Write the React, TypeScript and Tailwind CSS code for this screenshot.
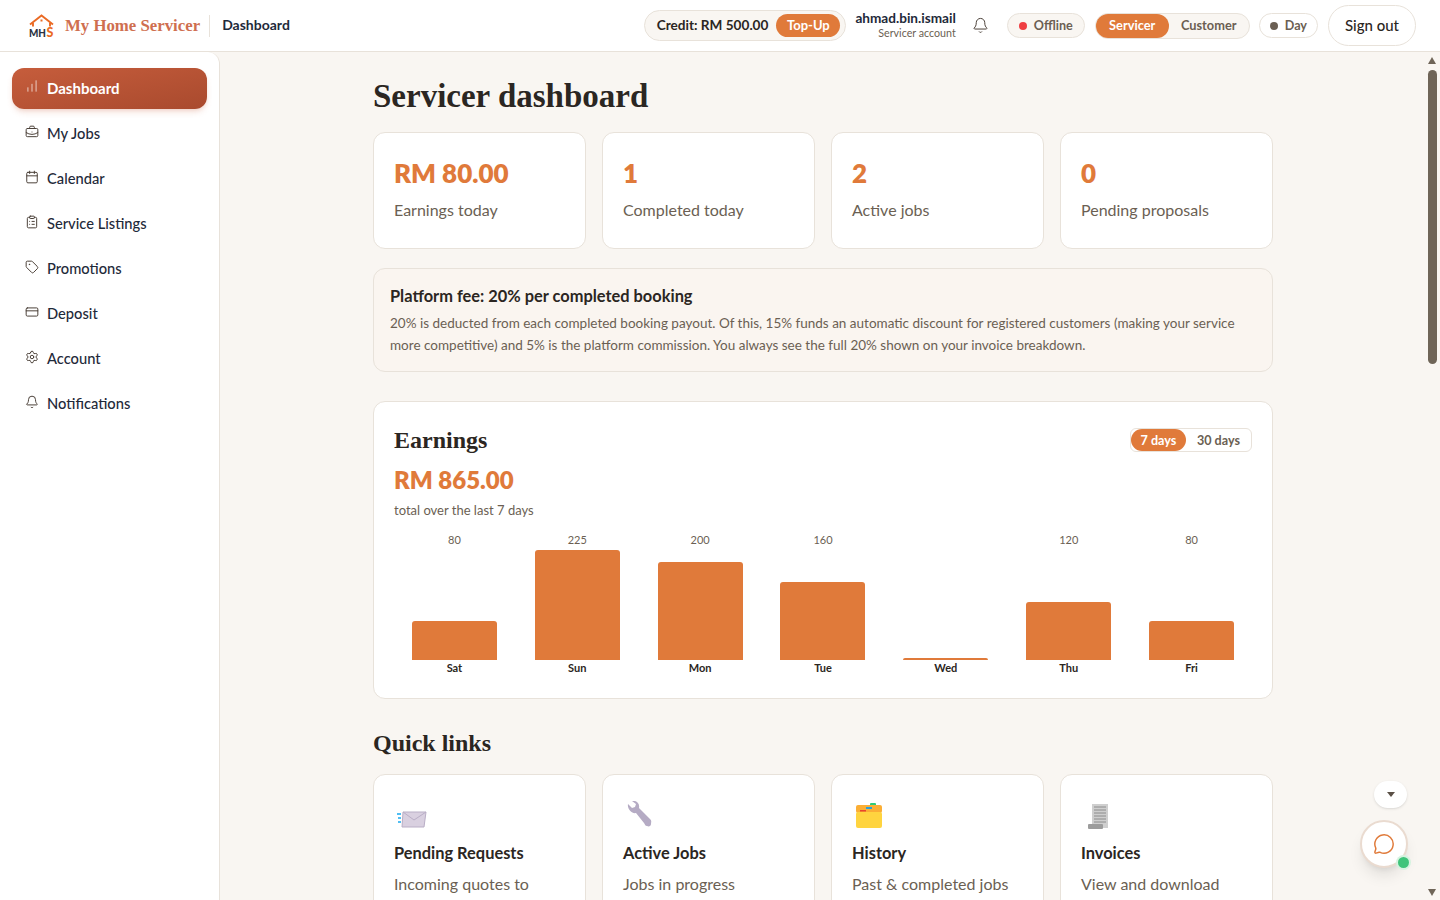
import { Bell, BriefcaseBusiness, Calendar, ChartNoAxesColumnIncreasing, ClipboardList, CreditCard, MessageCircle, Settings, Tag } from 'lucide-react';

const sans = { fontFamily: 'Lato, "Noto Sans", sans-serif' };

const navItems = [
  { label: 'Dashboard', icon: ChartNoAxesColumnIncreasing, active: true },
  { label: 'My Jobs', icon: BriefcaseBusiness },
  { label: 'Calendar', icon: Calendar },
  { label: 'Service Listings', icon: ClipboardList },
  { label: 'Promotions', icon: Tag },
  { label: 'Deposit', icon: CreditCard },
  { label: 'Account', icon: Settings },
  { label: 'Notifications', icon: Bell },
];

const stats = [
  { value: 'RM 80.00', label: 'Earnings today' },
  { value: '1', label: 'Completed today' },
  { value: '2', label: 'Active jobs' },
  { value: '0', label: 'Pending proposals' },
];

const bars = [
  { day: 'Sat', value: 80, height: 39 },
  { day: 'Sun', value: 225, height: 110 },
  { day: 'Mon', value: 200, height: 98 },
  { day: 'Tue', value: 160, height: 78 },
  { day: 'Wed', value: 0, height: 2 },
  { day: 'Thu', value: 120, height: 58 },
  { day: 'Fri', value: 80, height: 39 },
];

function Logo() {
  return (
    <svg width="27" height="24" viewBox="0 0 27 24" fill="none">
      <path d="M2 10.5 13.5 1.5 25 10.5M5 9v3.5M22 9v3.5" stroke="#ea6a24" strokeWidth="1.9" />
      <path d="M12.5 5.5h2v2h-2z" fill="#ea6a24" />
      <text x="1" y="22.5" fontSize="11.5" fontWeight="900" fill="#2a3342" fontFamily="Lato, sans-serif" textLength="17" lengthAdjust="spacingAndGlyphs">MH</text>
      <text x="18.5" y="22.5" fontSize="12.5" fontWeight="900" fill="#ea6a24" fontFamily="Lato, sans-serif">S</text>
    </svg>
  );
}

function MailIcon() {
  return (
    <svg width="32" height="20" viewBox="0 0 32 20" className="ml-[2px]">
      <path d="M1 5h4M2 9h3M2 13h3" stroke="#18a9ee" strokeWidth="1.5" />
      <path d="M7 3h23l-2 15H6z" fill="#d9d0e0" stroke="#b9aec6" />
      <path d="M7 3l11 8 12-8" fill="none" stroke="#b9aec6" />
    </svg>
  );
}

function WrenchIcon() {
  return (
    <svg width="28" height="28" viewBox="0 0 28 28" className="ml-[3px]">
      <path d="M2 3l4 4 3-1 1-3-4-3c4-1 8 2 7 7l11 11c2 2 1 3 1 5 0 2-2 3-4 2-2 0-2-2-3-3L10 12C6 13 1 8 2 3z" fill="#b5abc4" />
    </svg>
  );
}

function FolderIcon() {
  return (
    <svg width="28" height="26" viewBox="0 0 28 26" className="ml-[3px]">
      <rect x="15" y="0" width="6" height="3" rx="1" fill="#2fca78" />
      <rect x="1" y="2" width="26" height="8" rx="2" fill="#fbae35" />
      <rect x="11" y="4" width="6" height="2" fill="#2a9fd8" />
      <rect x="5" y="7" width="6" height="1.5" fill="#e8452c" />
      <rect x="1" y="9" width="26" height="16" rx="2" fill="#ffd43f" />
    </svg>
  );
}

function ReceiptIcon() {
  return (
    <svg width="22" height="26" viewBox="0 0 22 26" className="ml-[6px]">
      <rect x="5" y="1" width="16" height="24" fill="#cfcfcf" />
      <path d="M7 4h12M7 7h12M7 10h12M7 13h12M7 16h12M7 19h12" stroke="#8c8c8c" />
      <rect x="1" y="21" width="15" height="5" rx="1" fill="#9c9c9c" />
    </svg>
  );
}

const quickLinks = [
  { icon: <MailIcon />, title: 'Pending Requests', text: 'Incoming quotes to' },
  { icon: <WrenchIcon />, title: 'Active Jobs', text: 'Jobs in progress' },
  { icon: <FolderIcon />, title: 'History', text: 'Past & completed jobs' },
  { icon: <ReceiptIcon />, title: 'Invoices', text: 'View and download' },
];

export default function App() {
  return (
    <div className="relative flex h-[900px] flex-col overflow-hidden bg-[#f9f6f2] text-[#2b2622]" style={sans}>
      <header className="flex h-[52px] shrink-0 items-center justify-between border-b border-[#e8e2da] bg-white pl-7 pr-6">
        <div className="flex items-center">
          <Logo />
          <span className="ml-[10px] font-['Liberation_Serif',serif] text-[16.8px] font-bold text-[#cf6f50]">My Home Servicer</span>
          <span className="ml-[9px] h-[22px] w-px bg-[#e8e2da]" />
          <span className="mb-[2px] ml-3 text-[14px] font-bold text-[#1f2a3a]">Dashboard</span>
        </div>
        <div className="flex items-center">
          <div className="flex h-[31px] items-center gap-2 rounded-full border border-[#e8e2da] bg-[#f9f6f2] pl-3 pr-[5px] text-[13.6px] font-bold">
            <span className="whitespace-nowrap">Credit: RM 500.00</span>
            <span className="flex h-[23px] w-[64px] items-center justify-center rounded-full bg-[#e07a3a] text-[13px] text-white">Top-Up</span>
          </div>
          <div className="ml-[9px] text-right leading-none">
            <div className="text-[13.6px] font-bold text-[#1f2a3a]">ahmad.bin.ismail</div>
            <div className="mt-[2px] text-[10.7px] text-[#6b5f53]">Servicer account</div>
          </div>
          <Bell size={17} strokeWidth={1.4} className="ml-[16px] text-[#4a4038]" />
          <div className="ml-[18px] flex h-[25px] items-center gap-[7px] rounded-full border border-[#e8e2da] bg-[#f9f6f2] px-[11px] pt-px text-[12.6px] font-bold text-[#6b5f53]">
            <span className="h-2 w-2 rounded-full bg-[#ef3e42]" />
            Offline
          </div>
          <div className="ml-[10px] flex h-[26px] items-center rounded-full border border-[#e8e2da] bg-[#f9f6f2] text-[12.8px] font-bold">
            <span className="flex h-full w-[73px] items-center justify-center rounded-full bg-[#e07a3a] text-white">Servicer</span>
            <span className="w-[80px] text-center text-[#6b5f53]">Customer</span>
          </div>
          <div className="ml-[9px] flex h-[25px] items-center gap-[7px] rounded-full border border-[#e8e2da] bg-white px-[10px] pt-px text-[12.6px] font-bold text-[#6b5f53]">
            <span className="h-2 w-2 rounded-full bg-[#6b5f53]" />
            Day
          </div>
          <button className="ml-[10px] h-[41px] w-[88px] rounded-full border border-[#e8e2da] bg-white text-[15px] font-medium">Sign out</button>
        </div>
      </header>

      <div className="flex min-h-0 flex-1">
        <aside className="w-[220px] shrink-0 rounded-tr-xl border-r border-[#e8e2da] bg-white px-3 pt-4">
          <nav className="flex flex-col gap-1">
            {navItems.map((item) => (
              <a
                key={item.label}
                className={
                  item.active
                    ? 'flex h-[41px] items-center gap-2 rounded-xl bg-gradient-to-br from-[#c65d3c] to-[#a94a2e] pb-px pl-[13px] text-[15px] font-bold text-white shadow-md shadow-[#c65d3c]/20'
                    : 'flex h-[41px] items-center gap-2 pl-[13px] text-[14.7px] font-medium text-[#1f2a3a]'
                }
              >
                <item.icon size={14} strokeWidth={1.7} className={item.active ? '-mt-1 text-white/70' : '-mt-1 text-[#4a4038]'} />
                {item.label}
              </a>
            ))}
          </nav>
        </aside>

        <main className="min-w-0 flex-1 overflow-hidden pl-[2px]">
          <div className="mx-auto w-[900px] pt-[22px]">
            <h1 className="font-['Liberation_Serif',serif] text-[33px] font-bold leading-[44px]">Servicer dashboard</h1>

            <div className="mt-[14px] grid grid-cols-4 gap-4">
              {stats.map((stat) => (
                <div key={stat.label} className="h-[117px] rounded-xl border border-[#e8e2da] bg-white px-5 pt-[22px]">
                  <div className="text-[26px] font-extrabold leading-9 text-[#e07a3a]">{stat.value}</div>
                  <div className="mt-[7px] text-[16px] text-[#6b5f53]">{stat.label}</div>
                </div>
              ))}
            </div>

            <div className="mt-[19px] h-[104px] rounded-xl border border-[#e8e2da] bg-[#faf5f0] px-4 pt-[17px]">
              <div className="text-[16.4px] font-bold leading-5">Platform fee: 20% per completed booking</div>
              <p className="mt-[6px] text-[13.5px] leading-[22px] text-[#6b5f53]">
                20% is deducted from each completed booking payout. Of this, 15% funds an automatic discount for registered customers (making your service more competitive) and 5% is the platform commission. You always see the full 20% shown on your invoice breakdown.
              </p>
            </div>

            <section className="mt-[29px] h-[298px] rounded-xl border border-[#e8e2da] bg-white px-5 pt-[22px]">
              <div className="flex items-center justify-between">
                <h2 className="font-['Liberation_Serif',serif] text-[24px] font-bold leading-8">Earnings</h2>
                <div className="flex h-6 w-[122px] items-center rounded-md border border-[#e8e2da] text-[12.6px] font-bold text-[#6b5f53]">
                  <span className="flex h-full w-[55px] items-center justify-center rounded-full bg-[#e07a3a] pt-[2px] text-white">7 days</span>
                  <span className="flex-1 pt-[2px] text-center">30 days</span>
                </div>
              </div>
              <div className="mt-[8px] text-[24px] font-extrabold leading-8 text-[#e07a3a]">RM 865.00</div>
              <div className="mt-[5px] text-[13px] text-[#6b5f53]">total over the last 7 days</div>
              <div className="-mx-px mt-[11px] grid h-[144px] grid-cols-7">
                {bars.map((bar) => (
                  <div key={bar.day} className="flex flex-col items-center">
                    <span className="h-4 text-[11px] leading-4 text-[#6b5f53]">{bar.value > 0 ? bar.value : ''}</span>
                    <div className="flex w-full flex-1 items-end justify-center">
                      <div className="w-[85px] rounded-t-[3px] bg-[#e07a3a]" style={{ height: bar.height }} />
                    </div>
                    <span className="text-[11px] font-bold leading-4">{bar.day}</span>
                  </div>
                ))}
              </div>
            </section>

            <h2 className="mt-[26px] font-['Liberation_Serif',serif] text-[24px] font-bold leading-9">Quick links</h2>

            <div className="mt-[13px] grid grid-cols-4 gap-4">
              {quickLinks.map((link) => (
                <div key={link.title} className="h-[160px] rounded-xl border border-[#e8e2da] bg-white px-5 pt-[26px]">
                  <div className="flex h-7 items-end">{link.icon}</div>
                  <div className="mt-[12px] text-[16.4px] font-bold leading-6">{link.title}</div>
                  <div className="mt-[7px] text-[16px] leading-6 text-[#6b5f53]">{link.text}</div>
                </div>
              ))}
            </div>
          </div>
        </main>

        {/* scrollbar of the content pane */}
        <div className="flex w-4 shrink-0 flex-col items-start pb-[4px] pl-1 pt-[5px]">
          <span className="border-x-[4.5px] border-b-[7px] border-x-transparent border-b-[#6f6558]" />
          <span className="mt-[6px] h-[294px] w-[9px] rounded-full bg-[#6f6558]" />
          <span className="mt-auto border-x-[4.5px] border-t-[7px] border-x-transparent border-t-[#6f6558]" />
        </div>
      </div>

      {/* floating chat controls */}
      <button className="absolute left-[1374px] top-[781px] flex h-[27px] w-[33px] items-center justify-center rounded-full bg-white shadow">
        <span className="border-x-4 border-t-[5px] border-x-transparent border-t-[#5a5046]" />
      </button>
      <button className="absolute left-[1360px] top-[820px] flex h-12 w-12 items-center justify-center rounded-full border-2 border-[#eadbd0] bg-white shadow-lg">
        <MessageCircle size={22} strokeWidth={1.6} className="text-[#e07a3a]" />
        <span className="absolute bottom-[-2px] right-[-3px] h-[11px] w-[11px] rounded-full bg-[#3fc47a] ring-2 ring-[#d6f3e0]" />
      </button>
    </div>
  );
}
